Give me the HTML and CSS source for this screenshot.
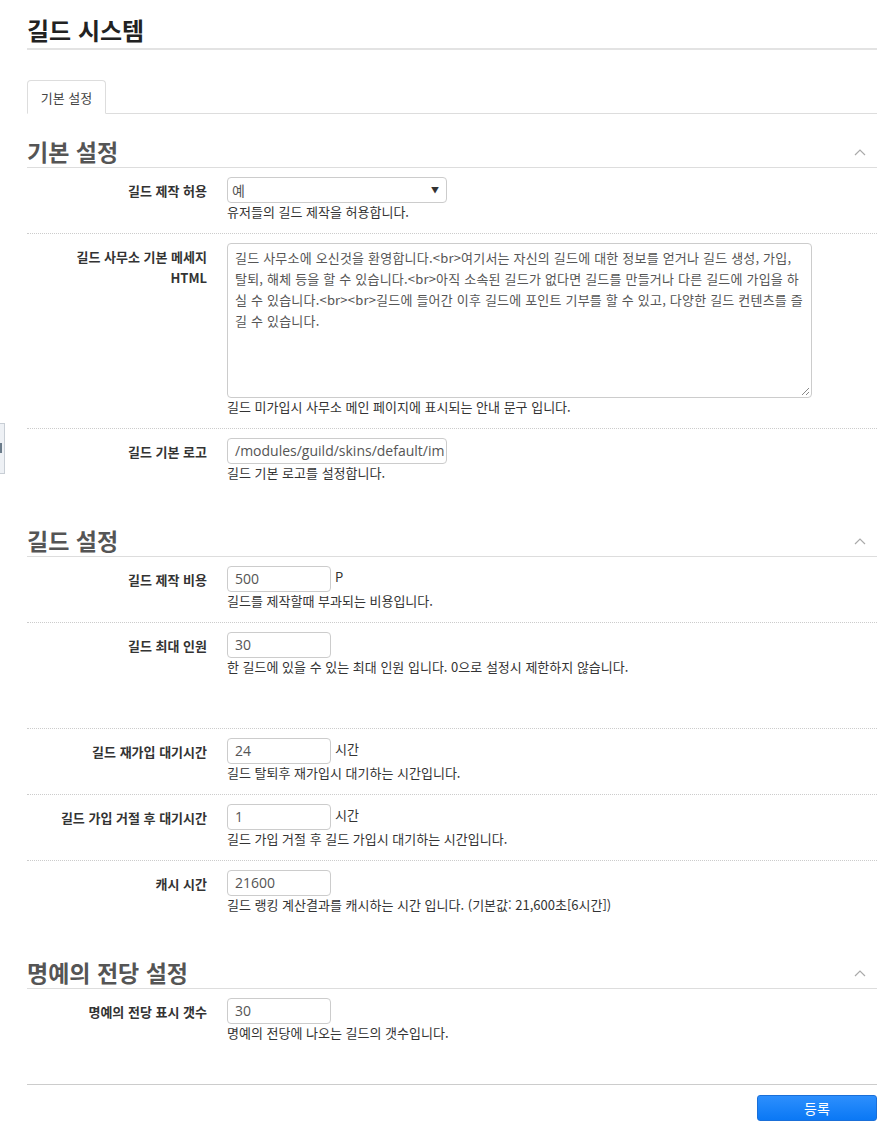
FILE: index.html
```html
<!DOCTYPE html>
<html lang="ko">
<head>
<meta charset="utf-8">
<title>길드 시스템</title>
<link rel="stylesheet" href="styles.css">
</head>
<body>
<div class="side-handle"><span class="side-handle__bar"></span></div>
<div class="page">
  <h1 class="page-title">길드 시스템</h1>

  <ul class="tabs">
    <li class="tabs__item tabs__item--active">기본 설정</li>
  </ul>

  <section class="section">
    <h2 class="section__title">기본 설정 <svg class="section__toggle" width="12" height="8" viewBox="0 0 12 8"><polyline points="1,7 6,2 11,7" fill="none" stroke="#aaa" stroke-width="1.2"/></svg></h2>
    <div class="row">
      <div class="row__label">길드 제작 허용</div>
      <div class="row__field">
        <div class="select"><span class="select__value">예</span><span class="select__arrow">▼</span></div>
        <p class="row__desc">유저들의 길드 제작을 허용합니다.</p>
      </div>
    </div>
    <div class="row">
      <div class="row__label">길드 사무소 기본 메세지<br>HTML</div>
      <div class="row__field">
        <div class="textarea"><span class="textarea__line">길드 사무소에 오신것을 환영합니다.&lt;br&gt;여기서는 자신의 길드에 대한 정보를 얻거나 길드 생성, 가입,</span><span class="textarea__line">탈퇴, 해체 등을 할 수 있습니다.&lt;br&gt;아직 소속된 길드가 없다면 길드를 만들거나 다른 길드에 가입을 하</span><span class="textarea__line">실 수 있습니다.&lt;br&gt;&lt;br&gt;길드에 들어간 이후 길드에 포인트 기부를 할 수 있고, 다양한 길드 컨텐츠를 즐</span><span class="textarea__line">길 수 있습니다.</span><svg class="textarea__grip" width="9" height="9" viewBox="0 0 9 9"><line x1="8" y1="1" x2="1" y2="8" stroke="#888" stroke-width="1"/><line x1="8" y1="5" x2="5" y2="8" stroke="#888" stroke-width="1"/></svg></div>
        <p class="row__desc">길드 미가입시 사무소 메인 페이지에 표시되는 안내 문구 입니다.</p>
      </div>
    </div>
    <div class="row row--last">
      <div class="row__label">길드 기본 로고</div>
      <div class="row__field">
        <div class="input input--wide">/modules/guild/skins/default/im</div>
        <p class="row__desc">길드 기본 로고를 설정합니다.</p>
      </div>
    </div>
  </section>

  <section class="section">
    <h2 class="section__title">길드 설정 <svg class="section__toggle" width="12" height="8" viewBox="0 0 12 8"><polyline points="1,7 6,2 11,7" fill="none" stroke="#aaa" stroke-width="1.2"/></svg></h2>
    <div class="row">
      <div class="row__label">길드 제작 비용</div>
      <div class="row__field">
        <div class="inline"><div class="input">500</div><span class="suffix">P</span></div>
        <p class="row__desc">길드를 제작할때 부과되는 비용입니다.</p>
      </div>
    </div>
    <div class="row row--tall">
      <div class="row__label">길드 최대 인원</div>
      <div class="row__field">
        <div class="input">30</div>
        <p class="row__desc">한 길드에 있을 수 있는 최대 인원 입니다. 0으로 설정시 제한하지 않습니다.</p>
      </div>
    </div>
    <div class="row">
      <div class="row__label">길드 재가입 대기시간</div>
      <div class="row__field">
        <div class="inline"><div class="input">24</div><span class="suffix">시간</span></div>
        <p class="row__desc">길드 탈퇴후 재가입시 대기하는 시간입니다.</p>
      </div>
    </div>
    <div class="row">
      <div class="row__label">길드 가입 거절 후 대기시간</div>
      <div class="row__field">
        <div class="inline"><div class="input">1</div><span class="suffix">시간</span></div>
        <p class="row__desc">길드 가입 거절 후 길드 가입시 대기하는 시간입니다.</p>
      </div>
    </div>
    <div class="row row--last">
      <div class="row__label">캐시 시간</div>
      <div class="row__field">
        <div class="input">21600</div>
        <p class="row__desc">길드 랭킹 계산결과를 캐시하는 시간 입니다. (기본값: 21,600초[6시간])</p>
      </div>
    </div>
  </section>

  <section class="section">
    <h2 class="section__title">명예의 전당 설정 <svg class="section__toggle" width="12" height="8" viewBox="0 0 12 8"><polyline points="1,7 6,2 11,7" fill="none" stroke="#aaa" stroke-width="1.2"/></svg></h2>
    <div class="row row--last">
      <div class="row__label">명예의 전당 표시 갯수</div>
      <div class="row__field">
        <div class="input">30</div>
        <p class="row__desc">명예의 전당에 나오는 길드의 갯수입니다.</p>
      </div>
    </div>
  </section>

  <div class="actions">
    <button class="btn-primary" type="button">등록</button>
  </div>
</div>
</body>
</html>
```

FILE: styles.css
```css
* { box-sizing: border-box; }
html, body { margin: 0; padding: 0; background: #fff; }
body {
  font-family: "Noto Sans CJK KR", "Open Sans", sans-serif;
  font-size: 13px;
  color: #333;
  position: relative;
}
.side-handle {
  position: absolute;
  left: -1px;
  top: 423px;
  width: 6px;
  height: 51px;
  background: #eef1f5;
  border: 1px solid #c8ced5;
}
.side-handle__bar {
  position: absolute;
  left: 0;
  top: 19px;
  width: 2px;
  height: 10px;
  background: #6b7c8a;
}
.page {
  padding: 0 10px 40px 27px;
}
.page-title {
  margin: 0;
  padding: 15px 0 3px;
  font-size: 24px;
  line-height: 30px;
  font-weight: bold;
  color: #222;
  border-bottom: 2px solid #e3e3e3;
}
.tabs {
  list-style: none;
  margin: 30px 0 0;
  padding: 0;
  display: flex;
  border-bottom: 1px solid #ddd;
}
.tabs__item {
  height: 34px;
  width: 79px;
  margin-bottom: -1px;
  display: flex;
  align-items: center;
  justify-content: center;
  font-size: 13px;
  color: #444;
  border: 1px solid #ddd;
  border-bottom-color: #fff;
  border-radius: 4px 4px 0 0;
  background: #fff;
}
.section__title {
  margin: 22px 0 0;
  padding: 0 0 1px;
  display: flex;
  align-items: center;
  justify-content: space-between;
  font-size: 23px;
  line-height: 30px;
  font-weight: bold;
  color: #555;
  border-bottom: 1px solid #ddd;
}
.section + .section .section__title { margin-top: 31px; }
.section__toggle { margin-right: 11px; margin-top: 2px; }
.row {
  display: grid;
  grid-template-columns: 180px 1fr;
  column-gap: 20px;
  padding: 9px 0 12px;
  border-bottom: 1px dotted #ccc;
}
.row--last { border-bottom: 0; }
.row--tall { padding-bottom: 52px; }
.row__label {
  text-align: right;
  font-weight: bold;
  font-size: 13px;
  line-height: 21px;
  padding-top: 3px;
  color: #333;
}
.row__field { min-width: 0; }
.row__desc {
  margin: 0;
  font-size: 13px;
  line-height: 18px;
  color: #333;
}
.select {
  position: relative;
  width: 220px;
  height: 26px;
  border: 1px solid #ccc;
  border-radius: 4px;
  padding: 0 4px;
  font-size: 14px;
  line-height: 24px;
  color: #555;
}
.select__arrow {
  position: absolute;
  right: 7px;
  top: 0;
  font-size: 8px;
  color: #333;
}
.textarea {
  position: relative;
  width: 585px;
  height: 155px;
  border: 1px solid #ccc;
  border-radius: 4px;
  padding: 3px 7px;
  font-size: 13px;
  line-height: 21px;
  letter-spacing: 0.2px;
  color: #555;
  overflow: hidden;
}
.textarea__line {
  display: block;
  white-space: nowrap;
}
.textarea__grip {
  position: absolute;
  right: 1px;
  bottom: 1px;
}
.input {
  width: 104px;
  height: 26px;
  border: 1px solid #ccc;
  border-radius: 4px;
  padding: 0 7px;
  font-family: "Open Sans", "Noto Sans CJK KR", sans-serif;
  font-size: 14px;
  line-height: 24px;
  color: #555;
  white-space: nowrap;
  overflow: hidden;
}
.input--wide { width: 220px; }
.inline {
  display: flex;
  align-items: flex-start;
}
.suffix {
  margin-left: 4px;
  padding-top: 2px;
  font-size: 13px;
  line-height: 18px;
  color: #333;
}
.actions {
  margin-top: 30px;
  padding-top: 10px;
  border-top: 1px solid #ccc;
  display: flex;
  justify-content: flex-end;
}
.btn-primary {
  width: 120px;
  height: 26px;
  border: 1px solid #1a6fd8;
  border-radius: 3px;
  background: linear-gradient(#2d8ffd, #0a78f5);
  color: #fff;
  font-family: "Noto Sans CJK KR", sans-serif;
  font-size: 14px;
  line-height: 24px;
  padding: 0;
}
```
